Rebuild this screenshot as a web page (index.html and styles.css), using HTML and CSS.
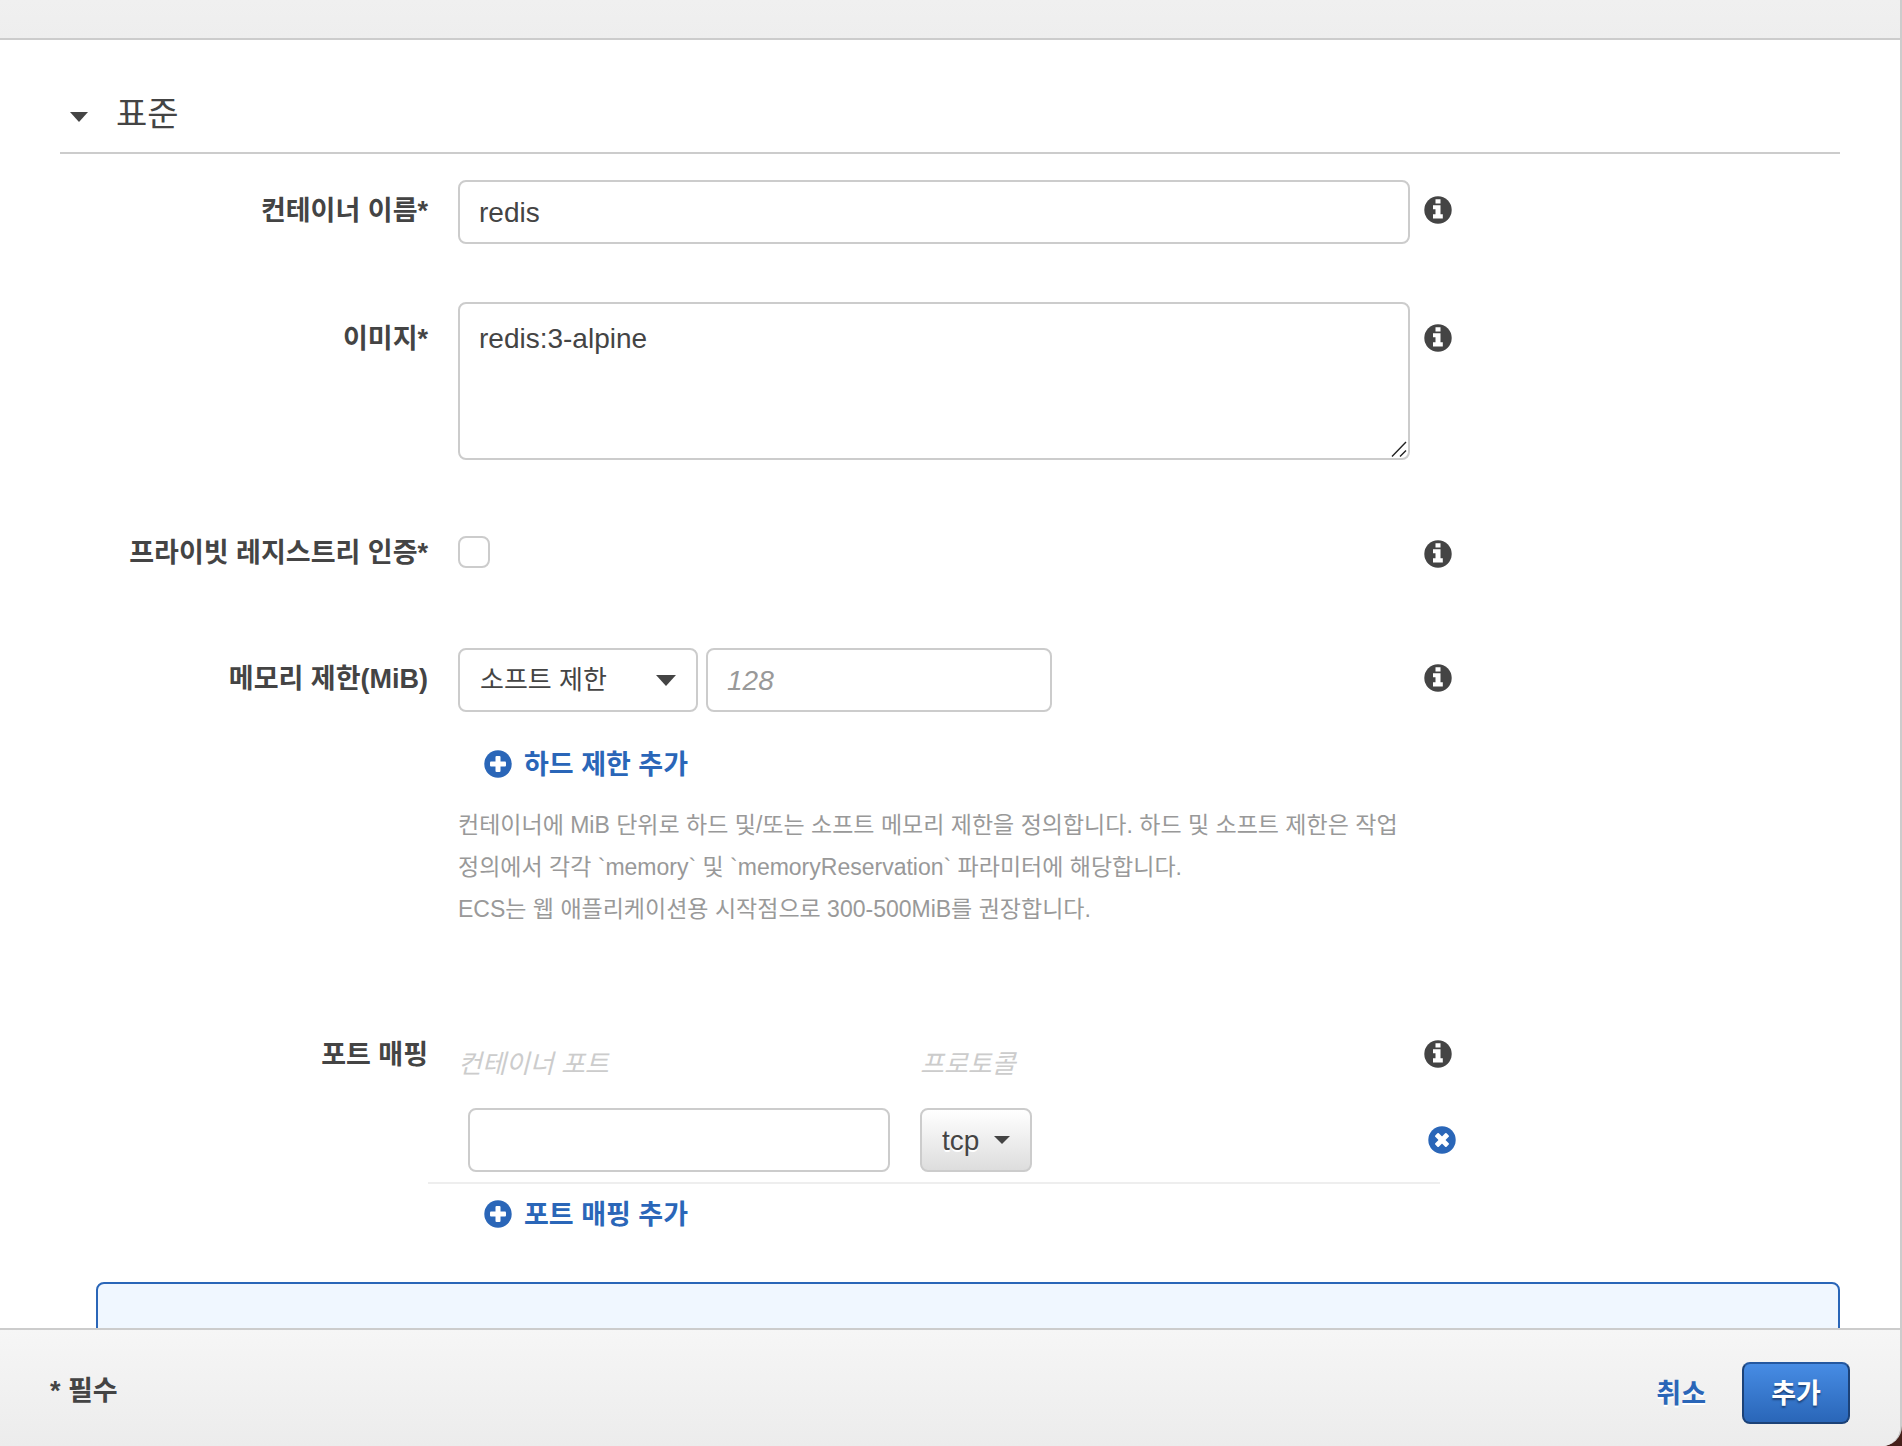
FILE: index.html
```html
<!DOCTYPE html>
<html lang="ko">
<head>
    <meta charset="UTF-8">
    <meta name="viewport" content="width=device-width, initial-scale=1.0">
    <title>컨테이너 추가</title>
    <link rel="stylesheet" href="styles.css">
</head>
<body>
  <!-- shared icons -->
  <svg class="sprite" aria-hidden="true">
    <symbol id="i-info" viewBox="0 0 28 28">
      <circle cx="14" cy="14" r="13.7"/>
      <path class="hole" d="M11.5 3.2h5v4.3h-5zM9 9.2h7.5v9h2.3v4.3H9v-4.3h2.5v-5H9z"/>
    </symbol>
    <symbol id="i-plus" viewBox="0 0 28 28">
      <circle cx="14" cy="14" r="13.7"/>
      <rect class="hole" x="11.5" y="6" width="5" height="16" rx="1"/>
      <rect class="hole" x="6" y="11.5" width="16" height="5" rx="1"/>
    </symbol>
    <symbol id="i-remove" viewBox="0 0 28 28">
      <circle cx="14" cy="14" r="13.7"/>
      <g transform="rotate(45 14 14)">
        <rect class="hole" x="11.5" y="6" width="5" height="16" rx="1"/>
        <rect class="hole" x="6" y="11.5" width="16" height="5" rx="1"/>
      </g>
    </symbol>
    <symbol id="i-caret" viewBox="0 0 20 11" preserveAspectRatio="none">
      <path d="M0 0h20L10 11z"/>
    </symbol>
  </svg>

  <div class="modal">
    <header class="modal-top"></header>

    <main class="modal-body">
      <h2 class="section-title">
        <svg class="title-caret"><use href="#i-caret"/></svg>
        표준
      </h2>

      <form class="form" id="container-form">
        <div class="row">
          <label class="label" for="name">컨테이너 이름*</label>
          <div class="control">
            <input class="text-input" id="name" type="text" value="redis">
          </div>
          <svg class="icon info"><use href="#i-info"/></svg>
        </div>

        <div class="row row-image">
          <label class="label" for="image">이미지*</label>
          <div class="control">
            <textarea class="text-input area" id="image">redis:3-alpine</textarea>
            <svg class="grip" viewBox="0 0 16 16"><path d="M1 15.5L15 1M9 15.5L15 9.5"/></svg>
          </div>
          <svg class="icon info"><use href="#i-info"/></svg>
        </div>

        <div class="row row-auth">
          <label class="label" for="auth">프라이빗 레지스트리 인증*</label>
          <div class="control">
            <input class="check" id="auth" type="checkbox">
          </div>
          <svg class="icon info"><use href="#i-info"/></svg>
        </div>

        <div class="row row-memory">
          <label class="label" for="limit">메모리 제한(MiB)</label>
          <div class="control">
            <div class="limit">
              <div class="picker">
                <select class="select" id="limit-type" aria-label="제한 유형">
                  <option>소프트 제한</option>
                </select>
                <svg class="picker-caret"><use href="#i-caret"/></svg>
              </div>
              <input class="text-input limit-value" id="limit" type="text" placeholder="128">
            </div>
            <button class="add-link" type="button">
              <svg class="icon"><use href="#i-plus"/></svg>하드 제한 추가
            </button>
            <p class="help">컨테이너에 MiB 단위로 하드 및/또는 소프트 메모리 제한을 정의합니다. 하드 및 소프트 제한은 작업 정의에서 각각 `memory` 및 `memoryReservation` 파라미터에 해당합니다.<br>ECS는 웹 애플리케이션용 시작점으로 300-500MiB를 권장합니다.</p>
          </div>
          <svg class="icon info"><use href="#i-info"/></svg>
        </div>

        <div class="row row-ports">
          <span class="label">포트 매핑</span>
          <div class="control">
            <div class="ports">
              <label class="port-head" for="port">컨테이너 포트</label>
              <label class="port-head" for="protocol">프로토콜</label>
              <input class="text-input port" id="port" type="text">
              <div class="picker protocol">
                <select class="select select-button" id="protocol">
                  <option>tcp</option>
                </select>
                <svg class="picker-caret"><use href="#i-caret"/></svg>
              </div>
              <button class="remove" type="button" aria-label="삭제">
                <svg class="icon"><use href="#i-remove"/></svg>
              </button>
            </div>
            <button class="add-link" type="button">
              <svg class="icon"><use href="#i-plus"/></svg>포트 매핑 추가
            </button>
          </div>
          <svg class="icon info"><use href="#i-info"/></svg>
        </div>
      </form>

      <div class="notice"></div>
    </main>

    <footer class="modal-footer">
      <span class="required">* 필수</span>
      <button class="cancel" type="button">취소</button>
      <button class="submit" type="submit" form="container-form">추가</button>
    </footer>
  </div>
</body>
</html>
```
FILE: styles.css
```css
* {
  box-sizing: border-box;
}
body {
  margin: 0;
  background: #46201a;
  color: #444;
  font-family: "Liberation Sans", "Noto Sans CJK KR", sans-serif;
  font-size: 26px;
}
input, textarea, select, button {
  margin: 0;
  color: inherit;
  font: inherit;
}
button {
  padding: 0;
  border: 0;
  background: none;
  cursor: pointer;
}
.sprite {
  display: none;
}
.hole {
  fill: #fff;
}
.icon {
  display: block;
  flex: none;
  width: 28px;
  height: 28px;
  fill: currentColor;
}

/* modal frame */
.modal {
  display: flex;
  flex-direction: column;
  height: 100vh;
  border-right: 2px solid #ccc;
  border-bottom-right-radius: 20px;
  background: #fff;
  overflow: hidden;
}
.modal-top {
  flex: none;
  height: 40px;
  border-bottom: 2px solid #ccc;
  background: linear-gradient(#f0f0f0, #eee);
}
.modal-body {
  flex: 1;
  min-height: 0;
  padding: 0 60px;
  overflow: hidden;
}
.section-title {
  display: flex;
  align-items: center;
  gap: 28px;
  margin: 0 0 26px;
  padding: 50px 0 14px 10px;
  border-bottom: 2px solid #ccc;
  font-size: 34px;
  font-weight: 400;
  line-height: 48px;
}
.title-caret {
  width: 18px;
  height: 10px;
  margin-top: 6px;
  fill: #444;
}

/* form rows */
.row {
  display: grid;
  grid-template-columns: 368px minmax(0, 952px) 28px;
  align-items: start;
  margin-bottom: 58px;
}
.control {
  position: relative;
  margin-left: 30px;
  margin-right: -30px;
}
.info {
  margin: 16px 0 0 44px;
}
.label {
  font-size: 27px;
  font-weight: 700;
  line-height: 62px;
  text-align: right;
}
.text-input {
  display: block;
  width: 100%;
  height: 64px;
  padding: 2px 19px 0;
  border: 2px solid #ccc;
  border-radius: 8px;
  background: #fff;
  font-size: 28px;
}
.text-input::placeholder {
  color: #999;
  font-style: italic;
}
.area {
  height: 158px;
  padding: 17px 19px;
  line-height: 36px;
  resize: none;
}
.grip {
  position: absolute;
  right: 3px;
  bottom: 3px;
  width: 16px;
  height: 16px;
  fill: none;
  stroke: #222;
  stroke-width: 1.4;
}
.row-image {
  margin-bottom: 60px;
}
.row-image .label {
  padding-top: 6px;
}
.row-image .info {
  margin-top: 22px;
}
.row-auth {
  margin-bottom: 64px;
}
.row-auth .label {
  padding-top: 2px;
}
.row-auth .info {
  margin-top: 20px;
}
.check {
  display: block;
  width: 32px;
  height: 32px;
  margin: 16px 0;
  border: 2px solid #ccc;
  border-radius: 8px;
  background: #fff;
  appearance: none;
}

/* drop-downs */
.picker {
  position: relative;
  width: 240px;
}
.select {
  display: block;
  width: 100%;
  height: 64px;
  padding: 0 20px;
  border: 2px solid #ccc;
  border-radius: 8px;
  background: #fff;
  appearance: none;
}
.picker-caret {
  position: absolute;
  top: 27px;
  right: 22px;
  width: 20px;
  height: 11px;
  fill: #444;
  pointer-events: none;
}
.select-button {
  background: linear-gradient(#fff, #ddd);
  font-size: 28px;
  text-shadow: 0 2px 0 #fff;
}
.protocol {
  width: 112px;
}
.protocol .picker-caret {
  top: 28px;
  width: 16px;
  height: 8px;
}

/* memory limit */
.limit {
  display: flex;
  gap: 8px;
}
.limit-value {
  width: 346px;
}
.row-memory {
  margin-bottom: 94px;
}
.add-link {
  display: flex;
  align-items: center;
  gap: 12px;
  margin: 32px 0 0 26px;
  color: #2a66b8;
  font-size: 27px;
  font-weight: 700;
  line-height: 42px;
}
.add-link .icon {
  margin-bottom: 2px;
}
.help {
  margin: 18px 0 0;
  color: #999;
  font-size: 23px;
  line-height: 42px;
  word-break: keep-all;
}

/* port mappings */
.row-ports {
  margin-bottom: 46px;
}
.row-ports .info {
  margin-top: 16px;
}
.ports {
  display: grid;
  grid-template-columns: 432px 1fr auto;
  column-gap: 30px;
  align-items: center;
  margin: 0 -30px;
  padding: 20px 0 10px 30px;
  border-bottom: 2px solid #eee;
}
.port-head {
  margin-bottom: 24px;
  color: #ccc;
  font-style: italic;
  line-height: 40px;
}
.port-head:nth-of-type(2) {
  grid-column: 2 / 4;
}
.port {
  width: auto;
  margin-left: 10px;
}
.remove {
  margin-right: -16px;
  color: #2a66b8;
}
.row-ports .add-link {
  margin-top: 10px;
}
.notice {
  height: 160px;
  margin-left: 36px;
  border: 2px solid #2a66b8;
  border-radius: 8px;
  background: #f0f7ff;
}

/* footer */
.modal-footer {
  display: flex;
  flex: none;
  align-items: center;
  height: 118px;
  padding: 10px 50px 0;
  border-top: 2px solid #ccc;
  background: linear-gradient(#f6f6f6, #ececec);
  font-size: 27px;
  font-weight: 700;
}
.required {
  margin-right: auto;
  padding-bottom: 10px;
}
.cancel {
  margin-right: 36px;
  padding-bottom: 4px;
  color: #2a66b8;
  text-shadow: 0 2px 0 #fff;
}
.submit {
  width: 108px;
  height: 62px;
  padding-bottom: 4px;
  border: 2px solid #1c4278;
  border-top-color: #2458a0;
  border-radius: 8px;
  background: linear-gradient(#478ce4, #2a66b8);
  color: #fff;
  text-shadow: 0 2px 2px #1c4278;
}
```
